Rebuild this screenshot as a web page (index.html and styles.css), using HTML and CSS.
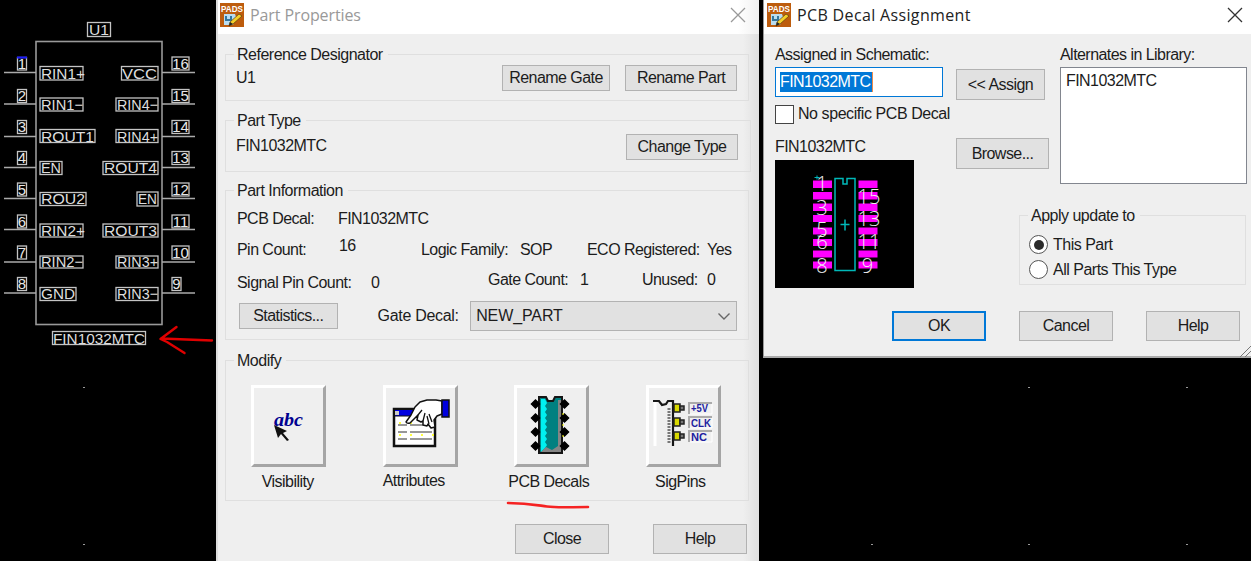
FILE: index.html
```
<!DOCTYPE html>
<html lang="en">
<head>
<meta charset="utf-8">
<title>Part Properties</title>
<link rel="stylesheet" href="styles.css">
</head>
<body>
<main class="desktop">
  <svg class="schematic" width="1251" height="561" viewBox="0 0 1251 561">
    <g class="grid-dots">
      <rect x="83" y="387" width="2" height="1"/><rect x="83" y="544" width="2" height="1"/>
      <rect x="871" y="544" width="2" height="1"/>
      <rect x="1028" y="387" width="2" height="1"/><rect x="1028" y="544" width="2" height="1"/>
      <rect x="1186" y="387" width="2" height="1"/><rect x="1186" y="544" width="2" height="1"/>
    </g>
    <rect class="body" x="36" y="41.500" width="126" height="283"/>
    <g class="wires">
      <path d="M4 72.500H36M4 104H36M4 136.500H36M4 167.500H36M4 198.500H36M4 229.500H36M4 262H36M4 293H36"/>
      <path d="M162 72.500H195M162 104H195M162 136.500H195M162 167.500H195M162 198.500H195M162 229.500H195M162 262H195M162 293H195"/>
    </g>
    <g class="frames">
      <rect x="87.500" y="22.500" width="23" height="14"/>
      <rect x="52.500" y="331.500" width="93" height="13"/>
      <rect x="40" y="66.500" width="43" height="13.500"/><rect x="40" y="98" width="43" height="13"/>
      <rect x="40" y="129.500" width="55" height="13"/><rect x="40" y="161.500" width="22" height="13"/>
      <rect x="40" y="192.500" width="46" height="13"/><rect x="40" y="224" width="43" height="13"/>
      <rect x="40" y="256" width="43" height="12"/><rect x="40" y="287.500" width="36" height="13"/>
      <rect x="121.500" y="66.500" width="36.500" height="13.500"/><rect x="116" y="98" width="42" height="13"/>
      <rect x="116" y="129.500" width="42" height="13"/><rect x="103" y="161.500" width="55" height="13"/>
      <rect x="137" y="192" width="21" height="14"/><rect x="103" y="224" width="55" height="13"/>
      <rect x="116" y="256" width="42" height="12"/><rect x="116" y="287.500" width="42" height="13"/>
      <rect x="17.500" y="57.500" width="9" height="12.500"/><rect x="17.500" y="89.500" width="9" height="13"/>
      <rect x="17.500" y="120.500" width="9" height="13"/><rect x="17.500" y="151.500" width="9" height="13"/>
      <rect x="17.500" y="183" width="9" height="13"/><rect x="17.500" y="215" width="9" height="13"/>
      <rect x="17.500" y="246" width="9" height="13"/><rect x="17.500" y="277.500" width="9" height="13"/>
      <rect x="172" y="57" width="17" height="13"/><rect x="172" y="89.500" width="17" height="13"/>
      <rect x="172" y="120.500" width="17" height="13"/><rect x="172" y="151.500" width="17" height="13"/>
      <rect x="172" y="183" width="17" height="13"/><rect x="172" y="215" width="17" height="13"/>
      <rect x="172" y="246" width="17" height="13"/><rect x="172" y="277.500" width="9" height="13"/>
    </g>
    <path d="M17 57.500H27" stroke="#1a1aff" stroke-width="2"/>
    <g class="pin-names">
      <text x="89" y="35" textLength="20" lengthAdjust="spacingAndGlyphs">U1</text>
      <text x="53" y="343.500" textLength="92" lengthAdjust="spacingAndGlyphs">FIN1032MTC</text>
      <text x="41" y="78.500" textLength="44" lengthAdjust="spacingAndGlyphs">RIN1+</text>
      <text x="41" y="109.500" textLength="42" lengthAdjust="spacingAndGlyphs">RIN1−</text>
      <text x="41" y="141.500" textLength="53" lengthAdjust="spacingAndGlyphs">ROUT1</text>
      <text x="41" y="173" textLength="20" lengthAdjust="spacingAndGlyphs">EN</text>
      <text x="41" y="204" textLength="44" lengthAdjust="spacingAndGlyphs">ROU2</text>
      <text x="41" y="235.500" textLength="44" lengthAdjust="spacingAndGlyphs">RIN2+</text>
      <text x="41" y="267" textLength="42" lengthAdjust="spacingAndGlyphs">RIN2−</text>
      <text x="41" y="299" textLength="34" lengthAdjust="spacingAndGlyphs">GND</text>
      <text x="122" y="78.500" textLength="35" lengthAdjust="spacingAndGlyphs">VCC</text>
      <text x="117" y="109.500" textLength="41" lengthAdjust="spacingAndGlyphs">RIN4−</text>
      <text x="117" y="141.500" textLength="41" lengthAdjust="spacingAndGlyphs">RIN4+</text>
      <text x="104" y="173" textLength="53" lengthAdjust="spacingAndGlyphs">ROUT4</text>
      <text x="138" y="204" textLength="19" lengthAdjust="spacingAndGlyphs">EN</text>
      <text x="104" y="235.500" textLength="53" lengthAdjust="spacingAndGlyphs">ROUT3</text>
      <text x="117" y="267" textLength="41" lengthAdjust="spacingAndGlyphs">RIN3+</text>
      <text x="117" y="299" textLength="41" lengthAdjust="spacingAndGlyphs">RIN3−</text>
    </g>
    <g class="pin-numbers">
      <text x="22" y="69">1</text><text x="22" y="101">2</text><text x="22" y="132">3</text><text x="22" y="163">4</text>
      <text x="22" y="194.500">5</text><text x="22" y="226.500">6</text><text x="22" y="257.500">7</text><text x="22" y="289">8</text>
      <text x="180.500" y="69">16</text><text x="180.500" y="101">15</text><text x="180.500" y="132">14</text><text x="180.500" y="163">13</text>
      <text x="180.500" y="194.500">12</text><text x="180.500" y="226.500">11</text><text x="180.500" y="257.500">10</text><text x="176.500" y="289">9</text>
    </g>
    <path class="marker" d="M212 340.500L161 338.500M176.500 327L160.500 339L167 342L184.500 353"/>
  </svg>

  <section class="window properties">
    <header class="titlebar inactive">
      <svg class="app-icon" viewBox="0 0 24 24">
        <rect width="24" height="24" fill="#bd5c0d"/>
        <text x="1" y="9" textLength="22" lengthAdjust="spacingAndGlyphs">PADS</text>
        <path d="M4 11h11l1 3-3 8H4z" fill="#b9dcef"/><path d="M6 13v4h5v-4" fill="none" stroke="#34769c" stroke-width="2"/>
        <path d="M10 19l9-8 3 2-9 8-4 2z" fill="#f4cf29" stroke="#5a3c10" stroke-width=".7"/><path d="M9 23l1-4 3 2z" fill="#222"/>
      </svg>
      <h1>Part Properties</h1>
      <svg class="close" viewBox="0 0 16 16"><path d="M1 1l14 14M15 1L1 15"/></svg>
    </header>

    <fieldset class="group reference">
      <legend>Reference Designator</legend>
      <div class="row"><span class="value">U1</span><button class="b-gate">Rename Gate</button><button class="b-part">Rename Part</button></div>
    </fieldset>
    <fieldset class="group type">
      <legend>Part Type</legend>
      <div class="row"><span class="value">FIN1032MTC</span><button>Change Type</button></div>
    </fieldset>
    <fieldset class="group info">
      <legend>Part Information</legend>
      <div class="facts decal"><span>PCB Decal:</span><span>FIN1032MTC</span></div>
      <div class="facts pins"><span>Pin Count:</span><span class="raised">16</span><span>Logic Family:</span><span>SOP</span><span>ECO Registered:</span><span>Yes</span></div>
      <div class="facts signals"><span class="lowered">Signal Pin Count:</span><span class="lowered">0</span><span>Gate Count:</span><span>1</span><span>Unused:</span><span>0</span></div>
      <div class="gate"><button>Statistics...</button><label>Gate Decal:</label>
        <div class="select"><span>NEW_PART</span><svg width="14" height="9" viewBox="0 0 14 9"><path d="M1.500 1.500L7 7l5.500-5.500"/></svg></div>
      </div>
    </fieldset>
    <fieldset class="group modify">
      <legend>Modify</legend>
      <div class="tools">
        <div class="tool t1">
          <div class="tile"><svg width="70" height="76" viewBox="0 0 70 76">
            <text class="abc" x="20" y="38" textLength="29" lengthAdjust="spacingAndGlyphs">abc</text>
            <path d="M20 37l13 6-4 2 6 7-2 1-6-7-3 4z" fill="#111"/>
          </svg></div><span>Visibility</span>
        </div>
        <div class="tool t2">
          <div class="tile"><svg width="70" height="76" viewBox="0 0 70 76">
            <rect x="8" y="21" width="41" height="37" fill="#fff" stroke="#111" stroke-width="2.500"/>
            <rect x="9" y="22" width="39" height="6" fill="#0000e0"/><path d="M8 28H49" stroke="#111"/><rect x="9" y="23" width="4" height="4" fill="#ccc"/>
            <path d="M12 37h9M24 37h22M12 44h9M24 44h22M12 51h9M24 51h22" stroke="#777" stroke-width="1.500"/>
            <path d="M13 35h2M24 35h2M35 47h2M13 47h2M24 47h2M46 47h2" stroke="#ff0" stroke-width="1.500"/>
            <path d="M56 13L50 12H41L34 14l-5 5-4 8-5 7q1 2 4 1l8-8-1 5 4 2 2-1 0 4 4 1 1-2 3 4 4-1-1-7 3-4 5-2z" fill="#fff" stroke="#111" stroke-width="1.500" stroke-linejoin="round"/>
            <path d="M32 27l4-5m1 11l2-8m4 11l-2-8m5 6l-3-8" fill="none" stroke="#111" stroke-width="1.300"/>
            <rect x="56" y="12" width="7" height="17" fill="#00d" stroke="#111" stroke-width="1.500"/>
          </svg></div><span>Attributes</span>
        </div>
        <div class="tool t3">
          <div class="tile"><svg width="70" height="76" viewBox="0 0 70 76">
            <path d="M22 9h7l2 4h5l2-4h7v56H22z" fill="#008080" stroke="#151515" stroke-width="2"/>
            <path d="M24 11h4l2 4-2 3 2 3-2 3 2 3-2 3 2 3-2 3 2 3-2 3 2 3-2 3 2 3-2 3 2 3-2 3-4 4z" fill="#00f0f0"/>
            <path d="M24 64l5-5 6 3 6-4V12h3v52z" fill="#858585"/>
            <path d="M14.500 16l4-4 4 4-4 4zM14.500 30l4-4 4 4-4 4zM14.500 44l4-4 4 4-4 4zM14.500 58l4-4 4 4-4 4zM43.500 16l4-4 4 4-4 4zM43.500 30l4-4 4 4-4 4zM43.500 44l4-4 4 4-4 4zM43.500 58l4-4 4 4-4 4z" fill="#000" stroke="#000" stroke-width="1.500"/>
            <path d="M46 25v2M46 36v2M46 47v2" stroke="#ff0"/>
          </svg></div><span>PCB Decals</span>
        </div>
        <div class="tool t4">
          <div class="tile"><svg width="70" height="76" viewBox="0 0 70 76">
            <path d="M6 14v44" stroke="#fff" stroke-width="3"/><path d="M20 20v36" stroke="#777" stroke-width="3" stroke-dasharray="2 1"/>
            <path d="M4 13h6l3 4 4-1 2-3h5v45" fill="none" stroke="#151515" stroke-width="2.200"/>
            <g fill="#d9d900" stroke="#222" stroke-width="1.500"><path d="M25 16h6v8h-6zM25 30h6v8h-6zM25 44h6v8h-6z"/><path d="M31 18h4v4h-4zM31 32h4v4h-4zM31 46h4v4h-4z" fill="#777"/></g>
            <path d="M40 26V15h23M40 40V29h23M40 54V43h23" fill="none" stroke="#aaa" stroke-width="2"/>
            <path d="M41 26h22V16M41 40h22V30M41 54h22V44" fill="none" stroke="#fff"/>
            <g class="nets"><text x="42" y="24" textLength="17" lengthAdjust="spacingAndGlyphs">+5V</text><text x="42" y="38.500" textLength="20" lengthAdjust="spacingAndGlyphs">CLK</text><text x="42" y="52.500" textLength="16" lengthAdjust="spacingAndGlyphs">NC</text></g>
          </svg></div><span>SigPins</span>
        </div>
      </div>
    </fieldset>
    <footer class="actions"><button>Close</button><button>Help</button></footer>
    <svg class="underline" width="88" height="12" viewBox="0 0 88 12"><path d="M2 3C21 3 30 5 41 6.500S64 7 82 7"/></svg>
  </section>

  <section class="window assignment">
    <header class="titlebar">
      <svg class="app-icon" viewBox="0 0 24 24">
        <rect width="24" height="24" fill="#bd5c0d"/>
        <text x="1" y="9" textLength="22" lengthAdjust="spacingAndGlyphs">PADS</text>
        <path d="M4 11h11l1 3-3 8H4z" fill="#b9dcef"/><path d="M6 13v4h5v-4" fill="none" stroke="#34769c" stroke-width="2"/>
        <path d="M10 19l9-8 3 2-9 8-4 2z" fill="#f4cf29" stroke="#5a3c10" stroke-width=".7"/><path d="M9 23l1-4 3 2z" fill="#222"/>
      </svg>
      <h1>PCB Decal Assignment</h1>
      <svg class="close" viewBox="0 0 16 16"><path d="M1 1l14 14M15 1L1 15"/></svg>
    </header>
    <div class="content">
      <div class="assigned">
        <label>Assigned in Schematic:</label>
        <div class="field"><span>FIN1032MTC</span></div>
        <div class="check"><i></i><span>No specific PCB Decal</span></div>
        <div class="decal-name">FIN1032MTC</div>
        <svg class="preview" width="139" height="128" viewBox="775 160 139 128">
          <g fill="#f0f">
            <path d="M813 180.500h19v7.500h-19zM813 192h19v7.500h-19zM813 203.500h19v7.500h-19zM813 215h19v7h-19zM813 227.500h19v7h-19zM813 239h19v7h-19zM813 250.500h19v7h-19zM813 261.500h19v7h-19z"/>
            <path d="M858.500 180.500h19v7.500h-19zM858.500 192h19v7.500h-19zM858.500 203.500h19v7.500h-19zM858.500 215h19v7h-19zM858.500 227.500h19v7h-19zM858.500 239h19v7h-19zM858.500 250.500h19v7h-19zM858.500 261.500h19v7h-19z"/>
          </g>
          <path d="M835 178.500h8v5.500h4v-5.500h8v92h-20zM840.500 224.500h9M845 219.500v11" fill="none" stroke="#00b8b8" stroke-width="1.500"/>
          <path d="M814.500 177.500h5M817 175.500v4" stroke="#00b8b8"/>
          <g class="pad-numbers">
            <text x="822" y="190.500">1</text><text x="822" y="214.500">3</text><text x="822" y="237">5</text><text x="822" y="248.500">6</text><text x="822" y="272.500">8</text>
            <text x="869" y="203.500">15</text><text x="869" y="226">13</text><text x="869" y="248.500">11</text><text x="867.500" y="272.500">9</text>
          </g>
        </svg>
      </div>
      <div class="options">
        <div class="library">
          <div class="commands"><button class="assign">&lt;&lt; Assign</button><button>Browse...</button></div>
          <div class="alternates"><label>Alternates in Library:</label><div class="list">FIN1032MTC</div></div>
        </div>
        <fieldset class="group apply">
          <legend>Apply update to</legend>
          <div class="radio on"><i></i><span>This Part</span></div>
          <div class="radio"><i></i><span>All Parts This Type</span></div>
        </fieldset>
      </div>
    </div>
    <footer class="actions"><button class="default">OK</button><button>Cancel</button><button>Help</button></footer>
    <svg class="grip" width="11" height="11" viewBox="0 0 11 11"><path d="M0 11L11 0M5 11l6-6"/></svg>
  </section>
</main>
</body>
</html>
```
FILE: styles.css
```
* { box-sizing: border-box; }
body { margin: 0; background: #000; overflow: hidden; font: 16px/20px "Liberation Sans", Arial, sans-serif; letter-spacing: -.55px; color: #1c1c1c; }
.desktop { position: relative; width: 1251px; height: 561px; background: #000; overflow: hidden; }
.schematic { display: block; }
.grid-dots { fill: #999; }
.body { fill: none; stroke: #999; stroke-width: 1.6; }
.wires { fill: none; stroke: #aaa; stroke-width: 1.6; }
.frames { fill: none; stroke: #c4c4c4; stroke-width: 1.3; }
.pin-names { fill: #ddd; font-size: 15px; letter-spacing: 0; }
.pin-numbers { fill: #e8e8e8; font-size: 15px; text-anchor: middle; letter-spacing: 0; }
.marker { fill: none; stroke: #e00000; stroke-width: 2.4; stroke-linecap: round; stroke-linejoin: round; }

.window { position: absolute; top: 0; background: #efefef; }
.properties { left: 216px; width: 543px; height: 561px; border-left: 2px solid #ddd; padding-left: 7px; background: linear-gradient(90deg, #efefef 525px, #e0e0e0 100%); }
.assignment { left: 763px; width: 488px; height: 358px; border-left: 1px solid #999; border-bottom: 2px solid #aaa; }
.titlebar { display: flex; align-items: center; height: 34px; padding: 0 12px 4px 4px; background: #fff; }
.properties .titlebar { margin-left: -7px; padding-left: 2px; padding-right: 13px; background: linear-gradient(90deg, #fff 520px, #f0f0f0 100%); }
.assignment .titlebar { padding-left: 3px; padding-right: 8px; }
.titlebar h1 { flex: 1; margin: 0 0 0 6px; font: 400 16px/22px "Open Sans", sans-serif; letter-spacing: .35px; color: #222; }
.titlebar.inactive h1 { color: #999; letter-spacing: -.1px; }
.app-icon { width: 24px; height: 24px; }
.app-icon text { fill: #fff; font: 700 9px "Liberation Sans", sans-serif; letter-spacing: 0; }
.close { width: 16px; height: 16px; fill: none; stroke: #333; stroke-width: 1.3; }
.inactive .close { stroke: #999; }

.group { margin: 0; padding: 0 11px; min-width: 0; border: 1.5px solid #dfdfdf; }
.group legend { height: 20px; margin-left: -3px; padding: 2px 5px 0 3px; line-height: 18px; letter-spacing: -.5px; }
.properties .group { width: 524px; }
button { display: flex; align-items: center; justify-content: center; margin: 0; padding: 0; height: 26px; border: 1.5px solid #b2b2b2; background: #e1e1e1; font: inherit; letter-spacing: inherit; color: #1c1c1c; white-space: nowrap; }
.row { display: flex; align-items: center; }
.row .value { flex: 1; margin-left: -1px; }
.reference { height: 57px; margin-top: 10px; }
.reference .row { padding-top: 1px; }
.b-gate { width: 108px; margin-right: 15px; }
.b-part { width: 112px; }
.type { height: 62px; margin-top: 9px; }
.properties .type { width: 526px; }
.type .row { padding-top: 4px; padding-right: 1px; align-items: flex-start; }
.type .value { padding-top: 2px; }
.type button { width: 112px; }
.info { height: 160px; margin-top: 8px; }
.facts { display: grid; white-space: nowrap; }
.decal { grid-template-columns: 101px auto; margin-top: 9px; }
.pins { grid-template-columns: 102px 82px 99px 67px 120px auto; margin-top: 11px; }
.signals { grid-template-columns: 134px 117px 92px 62px 65px auto; margin-top: 10px; height: 20px; }
.raised { margin-top: -4px; }
.lowered { margin-top: 3px; margin-bottom: -3px; }
.gate { display: flex; align-items: center; height: 30px; margin-top: 11px; }
.gate button { width: 99px; margin-left: 2px; }
.gate label { width: 93px; margin-left: 40px; letter-spacing: -.3px; }
.select { display: flex; align-items: center; justify-content: space-between; width: 268px; height: 30px; padding: 0 5px; border: 1.5px solid #b2b2b2; background: #e1e1e1; letter-spacing: -.1px; }
.select svg { fill: none; stroke: #666; stroke-width: 1.4; }
.modify { height: 151px; margin-top: 10px; }
.tools { display: flex; margin: 15px 0 0 14px; gap: 56px; }
.tool { display: flex; flex-direction: column; align-items: center; width: 75.5px; white-space: nowrap; }
.tile { width: 75px; height: 82px; border: 3px solid; border-color: #fff #a5a5a5 #a5a5a5 #fff; background: #efefef; overflow: hidden; }
.tile svg { display: block; letter-spacing: 0; }
.tool > span { margin-top: 5px; }
.t1 > span { margin-left: -2px; }
.t2 > span { margin-top: 4px; margin-left: -13px; }
.t3 > span { margin-left: -6px; }
.t4 > span { margin-left: -6px; }
.abc { fill: #000090; font: italic 700 19px "Liberation Serif", serif; }
.nets { fill: #2020a0; font: 700 10px "Liberation Sans", sans-serif; }
.actions { display: flex; }
.actions button { width: 94px; height: 30px; }
.properties .actions { margin: 23px 0 0 290px; gap: 44px; }
.underline { position: absolute; left: 288px; top: 500px; fill: none; stroke: #f52222; stroke-width: 2.6; stroke-linecap: round; }

.content { display: flex; height: 277px; padding: 11px 0 0 11px; }
.assigned { width: 181px; }
.assigned label, .alternates label { display: block; height: 22px; }
.field { width: 168px; height: 30px; padding: 4px 4px; border: 1.5px solid #0078d7; background: #fff; }
.field span { display: block; width: 93px; height: 20px; background: #0078d7; border-right: 1.5px solid #f08a48; color: #fff; }
.check { display: flex; align-items: center; height: 20px; margin-top: 7px; gap: 4px; white-space: nowrap; letter-spacing: -.43px; }
.check i { width: 19px; height: 19px; border: 1.5px solid #444; background: #fff; }
.decal-name { margin-top: 13px; }
.preview { display: block; margin-top: 3px; background: #000; }
.pad-numbers { fill: #eee; font: 300 20px "Open Sans", sans-serif; letter-spacing: 0; text-anchor: middle; }
.options { width: 292px; }
.library { display: flex; height: 160px; }
.commands { width: 104px; padding-top: 24px; }
.commands button { width: 93px; height: 31px; margin-bottom: 38px; }
.commands .assign { width: 89px; }
.list { width: 187px; height: 117px; padding: 3px 5px; border: 1.5px solid #82868f; background: #fff; }
.apply { width: 227px; height: 80px; margin-left: 63px; padding: 0 9px; }
.apply legend { margin-left: -1px; }
.radio { display: flex; align-items: center; height: 25px; gap: 5px; letter-spacing: -.5px; }
.radio:first-of-type { margin-top: 7px; }
.radio i { display: flex; width: 19px; height: 19px; border: 1.5px solid #555; border-radius: 50%; background: #fff; }
.radio.on i::before { content: ""; width: 10px; height: 10px; margin: auto; border-radius: 50%; background: #2b2b2b; }
.assignment .actions { margin-left: 128px; gap: 33px; }
.default { border: 2.5px solid #0078d7; }
.grip { position: absolute; right: 0; bottom: -1px; fill: none; stroke: #777; }
```
